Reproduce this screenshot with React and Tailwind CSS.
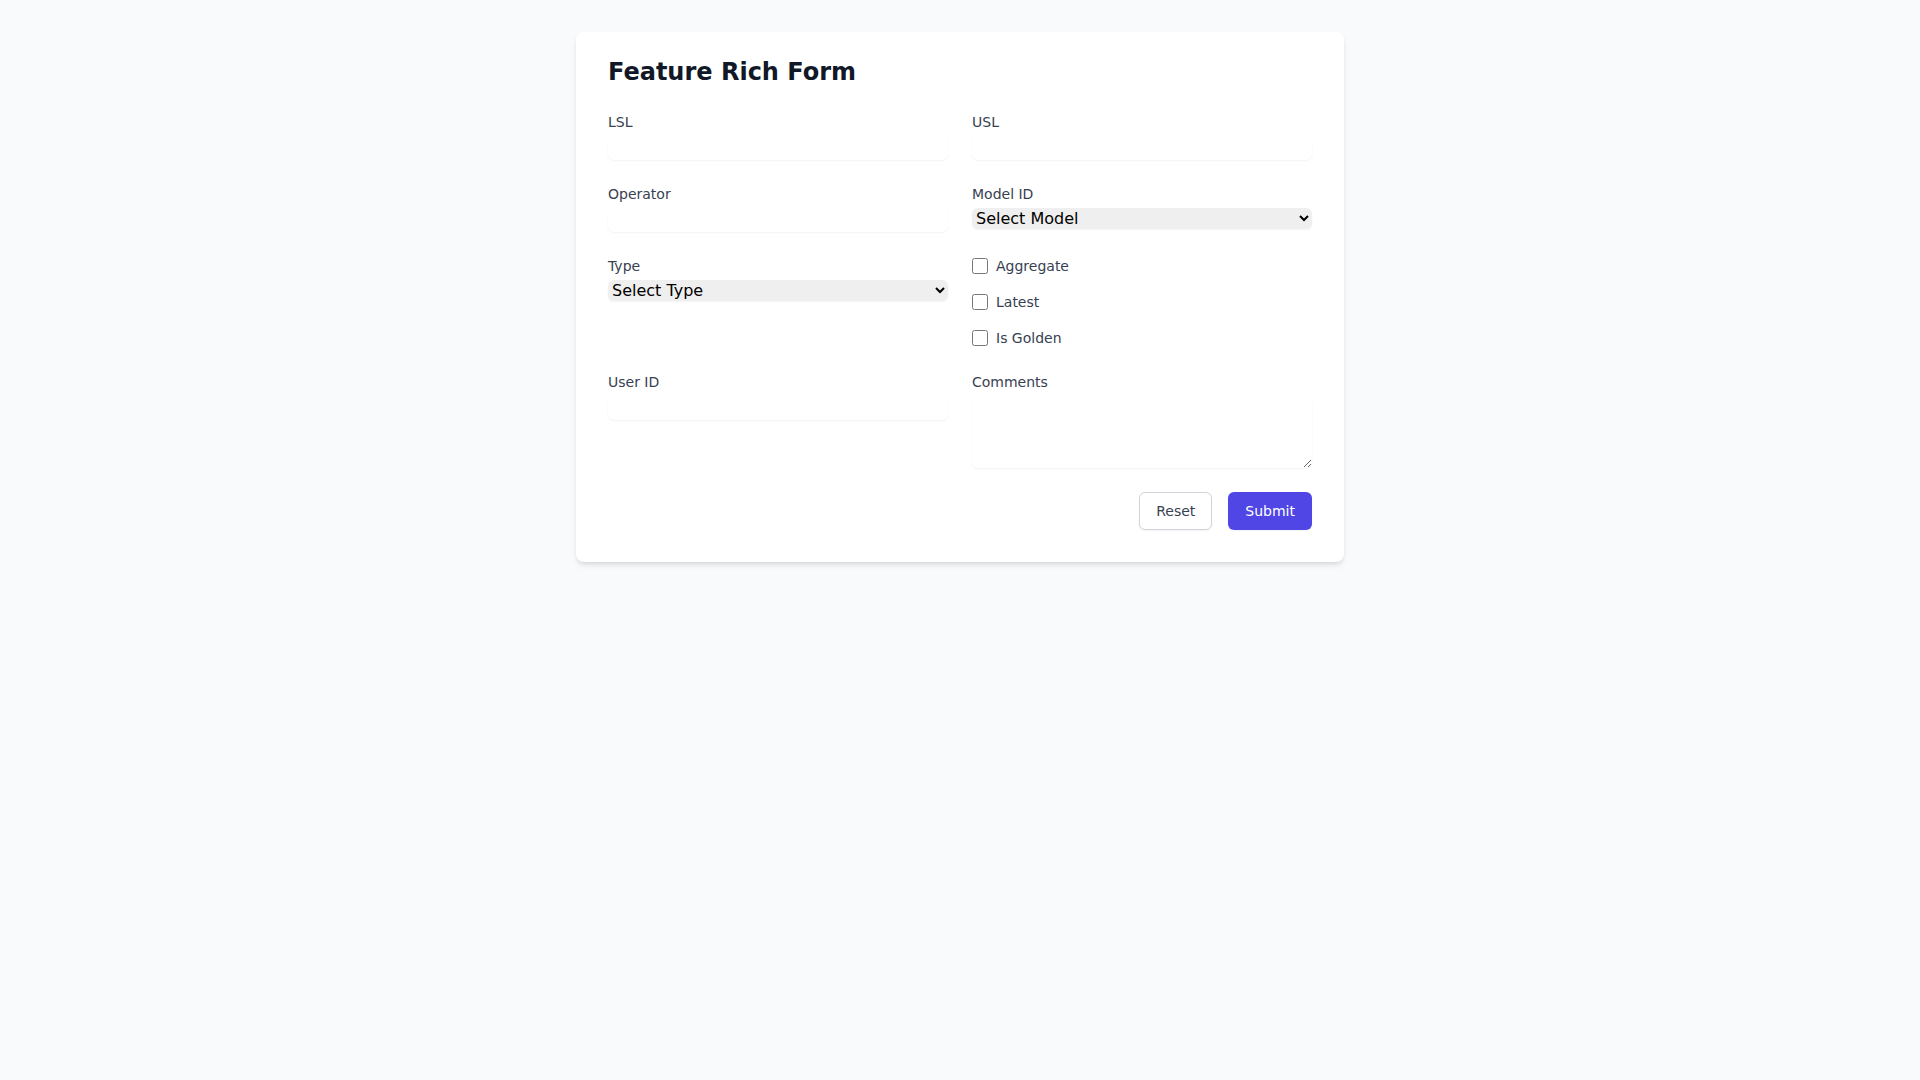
import React, { useState } from "react";

const label = "block text-sm text-[#374151]";
const input = "mt-1 block w-full rounded-md bg-white shadow-xs h-6 focus:outline-none";
const select = "mt-1 block w-full rounded-md bg-[#efefef] text-black shadow-xs";

export default function App() {
  const [form, setForm] = useState({
    lsl: "",
    usl: "",
    operator: "",
    modelId: "",
    type: "",
    aggregate: false,
    latest: false,
    isGolden: false,
    userId: "",
    comments: "",
  });

  const update = (key) => (e) =>
    setForm({
      ...form,
      [key]: e.target.type === "checkbox" ? e.target.checked : e.target.value,
    });

  return (
    <div
      className="min-h-screen bg-[#f9fafb] py-8"
      style={{ fontFamily: '"DejaVu Sans", sans-serif' }}
    >
      <div className="mx-auto max-w-3xl rounded-lg bg-white px-8 pt-6 pb-8 shadow-md">
        <h1 className="mb-6 text-2xl font-bold text-[#111827]">Feature Rich Form</h1>
        <form onSubmit={(e) => e.preventDefault()}>
          <div className="grid grid-cols-2 gap-6">
            <div>
              <label className={label}>LSL</label>
              <input type="number" value={form.lsl} onChange={update("lsl")} className={input} />
            </div>
            <div>
              <label className={label}>USL</label>
              <input type="number" value={form.usl} onChange={update("usl")} className={input} />
            </div>
            <div>
              <label className={label}>Operator</label>
              <input type="text" value={form.operator} onChange={update("operator")} className={input} />
            </div>
            <div>
              <label className={label}>Model ID</label>
              <select value={form.modelId} onChange={update("modelId")} className={select}>
                <option value="">Select Model</option>
                <option value="m1">Model 1</option>
                <option value="m2">Model 2</option>
              </select>
            </div>
            <div>
              <label className={label}>Type</label>
              <select value={form.type} onChange={update("type")} className={select}>
                <option value="">Select Type</option>
                <option value="a">Type A</option>
                <option value="b">Type B</option>
              </select>
            </div>
            <div className="space-y-4">
              {[
                ["aggregate", "Aggregate"],
                ["latest", "Latest"],
                ["isGolden", "Is Golden"],
              ].map(([key, text]) => (
                <div key={key} className="flex items-center">
                  <input
                    type="checkbox"
                    checked={form[key]}
                    onChange={update(key)}
                    className="m-0 h-4 w-4 rounded"
                  />
                  <label className="ml-2 text-sm text-[#374151]">{text}</label>
                </div>
              ))}
            </div>
            <div>
              <label className={label}>User ID</label>
              <input type="text" value={form.userId} onChange={update("userId")} className={input} />
            </div>
            <div>
              <label className={label}>Comments</label>
              <textarea
                rows={3}
                value={form.comments}
                onChange={update("comments")}
                className="mt-1 block w-full rounded-md bg-white shadow-xs focus:outline-none"
              />
            </div>
          </div>
          <div className="mt-6 flex justify-end gap-4">
            <button
              type="button"
              className="rounded-md border border-[#d1d5db] bg-white px-4 py-2 text-sm text-[#374151] shadow-xs"
            >
              Reset
            </button>
            <button
              type="submit"
              className="rounded-md border border-transparent bg-[#4f46e5] px-4 py-2 text-sm text-white shadow-xs"
            >
              Submit
            </button>
          </div>
        </form>
      </div>
    </div>
  );
}
